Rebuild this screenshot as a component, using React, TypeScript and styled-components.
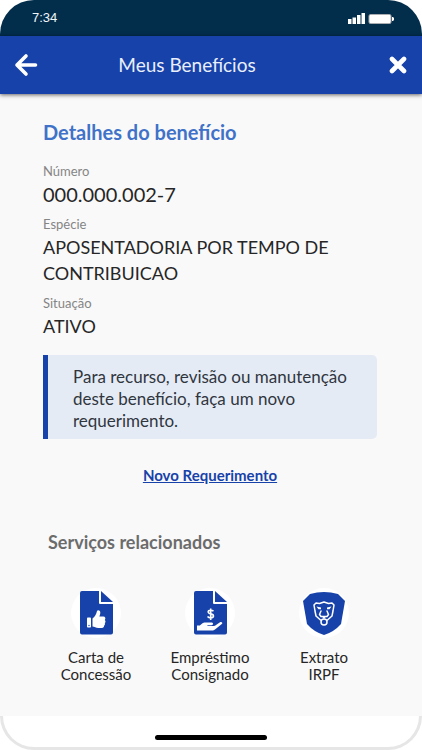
import React from "react";
import styled, { createGlobalStyle } from "styled-components";

const GlobalStyle = createGlobalStyle`
  *, *::before, *::after { box-sizing: border-box; }
  body { margin: 0; background: #ffffff; }
  h1, h2, dl, dt, dd, p, ul { margin: 0; padding: 0; }
  button { font: inherit; color: inherit; }
`;

const Screen = styled.div`
  min-height: 100vh;
  display: flex;
  flex-direction: column;
  overflow: hidden;
  background: #f9f9f9;
  color: #262626;
  font-family: Lato, "Open Sans", sans-serif;
  border-radius: 34px 34px 0 0;
`;

const StatusBar = styled.div`
  height: 36px;
  flex: none;
  display: flex;
  align-items: center;
  justify-content: space-between;
  padding: 0 28px 0 32px;
  background: #022d4b;
  color: #f2f6fa;
  font: 13px/16px "Liberation Sans", Arial, sans-serif;
`;

const Header = styled.header`
  height: 58px;
  flex: none;
  display: grid;
  grid-template-columns: 52px 1fr 48px;
  align-items: center;
  background: #1742a9;
  color: #ffffff;
  box-shadow: 0 1px 4px rgba(0, 0, 0, 0.6);
`;

const Title = styled.h1`
  padding-right: 52px;
  font-size: 19px;
  line-height: 24px;
  font-weight: 400;
  text-align: center;
  color: #e9effb;
`;

const IconButton = styled.button`
  width: 100%;
  height: 48px;
  padding: 0;
  display: grid;
  place-items: center;
  border: 0;
  background: none;
`;

const Content = styled.main`
  flex: 1;
  padding: 25px 45px 24px 43px;
`;

const Heading = styled.h2`
  font-size: 20px;
  line-height: 26px;
  font-weight: 700;
  color: #3f72c8;
`;

const Fields = styled.dl`
  margin-top: 16px;
`;

const Label = styled.dt`
  font-size: 13px;
  line-height: 20px;
  color: #858585;
`;

const Value = styled.dd<{ $numeric?: boolean }>`
  padding-bottom: 7px;
  font-size: ${({ $numeric }) => ($numeric ? 20 : 18)}px;
  line-height: 26px;
`;

const Notice = styled.p`
  margin-top: 9px;
  padding: 11px 25px 7px;
  border-left: 5px solid #1742a9;
  border-radius: 0 5px 5px 0;
  background: #e5ebf5;
  font-size: 17px;
  line-height: 22px;
  color: #303640;
`;

const NewRequest = styled.a`
  display: block;
  width: fit-content;
  margin: 26px auto 0;
  font-size: 15px;
  line-height: 20px;
  font-weight: 700;
  color: #1742a9;
  text-decoration: underline;
`;

const ServicesHeading = styled.h2`
  margin: 45px 0 0 5px;
  font-size: 18px;
  line-height: 24px;
  font-weight: 700;
  color: #6c6c6c;
`;

const Services = styled.ul`
  display: grid;
  grid-template-columns: repeat(3, 1fr);
  margin: 34px -4px 0;
  list-style: none;
`;

const Service = styled.button`
  width: 100%;
  padding: 0;
  border: 0;
  background: none;
  display: flex;
  flex-direction: column;
  align-items: center;
  gap: 11px;
  font-size: 15px;
  line-height: 17px;
  color: #262626;
`;

const ServiceIcon = styled.span`
  width: 50px;
  height: 50px;
  display: grid;
  place-items: center;
  border-radius: 50%;
  background: #ffffff;
`;

const Footer = styled.footer`
  height: 34px;
  flex: none;
  display: flex;
  justify-content: center;
  align-items: flex-end;
  padding-bottom: 7px;
  border: 3px solid #e6e6e6;
  border-top: 0;
  border-radius: 0 0 34px 34px;
  background: #ffffff;
`;

const FooterArea = styled.div`
  background: #ffffff;
`;

const HomeBar = styled.div`
  width: 27%;
  height: 5px;
  border-radius: 3px;
  background: #000000;
`;

const ArrowIcon = () => (
  <svg width="24" height="24" viewBox="0 0 24 24" fill="none" stroke="#fff" strokeWidth="3.6" strokeLinecap="round" strokeLinejoin="round" aria-hidden="true">
    <path d="M12 3L3 12l9 9M3 12h18.5" />
  </svg>
);

const CloseIcon = () => (
  <svg width="18" height="18" viewBox="0 0 18 18" fill="none" stroke="#fff" strokeWidth="4.6" strokeLinecap="round" aria-hidden="true">
    <path d="M3 3l12 12M15 3L3 15" />
  </svg>
);

const SignalAndBattery = () => (
  <svg width="46" height="14" viewBox="0 0 46 14" fill="#fff" aria-hidden="true">
    <path d="M0 8h3.500v5H0zM4.500 6.500H8V13H4.500zM9 4h3.500v9H9zM13.500 2H17v11h-3.500z" />
    <rect x="21" y="3.500" width="22" height="9" rx="1.500" stroke="#a9acb0" />
    <path d="M44 6h1l1 1v2l-1 1h-1z" />
  </svg>
);

const PageShape = () => (
  <>
    <path d="M2 0h17v11.500c0 1 .5 1.500 1.500 1.500H33v28.500a2 2 0 0 1-2 2H2a2 2 0 0 1-2-2V2a2 2 0 0 1 2-2z" fill="#1742a9" />
    <path d="M21 0l12 11H21z" fill="#1742a9" />
  </>
);

const LetterIcon = () => (
  <svg width="33" height="44" viewBox="0 0 33 44" aria-hidden="true">
    <PageShape />
    <g fill="#fff">
      <rect x="7" y="26.500" width="4" height="10" rx="0.800" />
      <path d="M12.500 27.500c2.500-1.500 3.800-4.500 4.500-7.500.4-1.500 3.300-1 3.300 1.400 0 1.800-.6 3-1 4.200h4c2 0 2.700 2 1.500 3.300 1 .8.900 2.400 0 3 .5 1 0 2.200-.7 2.700.1 1.500-.8 2.300-2.300 2.300h-3.500c-2.500 0-3.800-1.500-5.800-1.500z" />
    </g>
    <circle cx="9" cy="34.500" r="0.700" fill="#1742a9" />
  </svg>
);

const LoanIcon = () => (
  <svg width="33" height="44" viewBox="0 0 33 44" aria-hidden="true">
    <PageShape />
    <path d="M19.500 20.300c-.7-.7-1.700-1-2.700-1-3.400 0-3.500 3 0 3.600 3.700.7 3.400 4-.1 4-1.300 0-2.400-.5-3.200-1.400M16.700 17.500v11.500" fill="none" stroke="#fff" strokeWidth="1.600" />
    <path d="M3 34.500h2.800l2.400-2c1-.8 2-.9 3-.9h6.200c2.200 0 2.200 2.700 0 2.700h-4v.7h5.800c1.200 0 2-.4 2.800-1l4-2.800c1.500-1 3.200.6 1.800 1.900l-6.500 5.200c-1 .8-2 1.200-3.500 1.200H3z" fill="#fff" />
  </svg>
);

const LionIcon = () => (
  <svg width="44" height="44" viewBox="0 0 44 44" fill="none" aria-hidden="true">
    <path d="M8 3Q22-1 36 3l7 7-4 23q-7 8-17 11Q12 41 5 33L1 10z" fill="#1742a9" />
    <g stroke="#fff" strokeWidth="1.500" strokeLinecap="round" strokeLinejoin="round">
      <path d="M18.500 29l-4.500-4-1-5-1-6 2-2 3.500.5L22 11l4.500 1.500 3.500-.5 2 2-1 6-1 5-4.500 4" />
      <circle cx="22" cy="31" r="3" />
      <path d="M19 20l-1.500 3.500 1.500 2h6l1.500-2L25 20" />
    </g>
    <path d="M19.500 25h5L22 28zM14.500 15.500l4.500 1v1.800h-2.500zM29.500 15.500l-4.500 1v1.800h2.500z" fill="#fff" />
  </svg>
);

const fields = [
  { label: "Número", value: "000.000.002-7", numeric: true },
  { label: "Espécie", value: "APOSENTADORIA POR TEMPO DE CONTRIBUICAO" },
  { label: "Situação", value: "ATIVO" },
];

const services = [
  { first: "Carta de", second: "Concessão", Icon: LetterIcon },
  { first: "Empréstimo", second: "Consignado", Icon: LoanIcon },
  { first: "Extrato", second: "IRPF", Icon: LionIcon },
];

export default function App() {
  return (
    <>
      <GlobalStyle />
      <Screen>
        <StatusBar>
          <span>7:34</span>
          <SignalAndBattery />
        </StatusBar>
        <Header>
          <IconButton type="button" aria-label="Voltar"><ArrowIcon /></IconButton>
          <Title>Meus Benefícios</Title>
          <IconButton type="button" aria-label="Fechar"><CloseIcon /></IconButton>
        </Header>
        <Content>
          <Heading>Detalhes do benefício</Heading>
          <Fields>
            {fields.map(({ label, value, numeric }) => (
              <div key={label}>
                <Label>{label}</Label>
                <Value $numeric={numeric}>{value}</Value>
              </div>
            ))}
          </Fields>
          <Notice>Para recurso, revisão ou manutenção deste benefício, faça um novo requerimento.</Notice>
          <NewRequest href="#novo-requerimento">Novo Requerimento</NewRequest>
          <ServicesHeading>Serviços relacionados</ServicesHeading>
          <Services>
            {services.map(({ first, second, Icon }) => (
              <li key={first}>
                <Service type="button">
                  <ServiceIcon><Icon /></ServiceIcon>
                  <span>{first}<br />{second}</span>
                </Service>
              </li>
            ))}
          </Services>
        </Content>
        <FooterArea>
          <Footer><HomeBar /></Footer>
        </FooterArea>
      </Screen>
    </>
  );
}
